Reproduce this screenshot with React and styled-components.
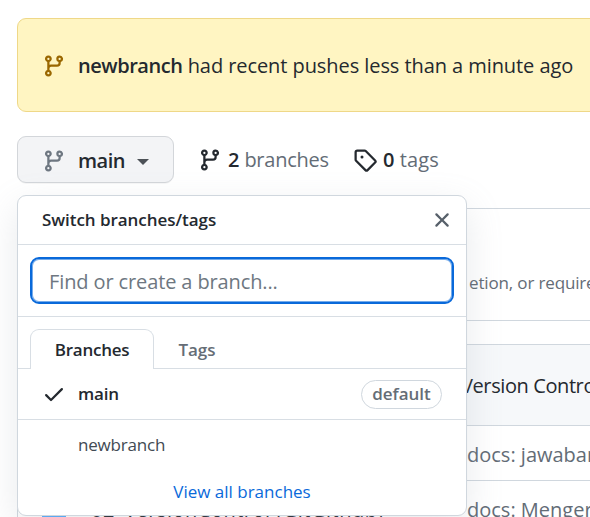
import React from "react";
import styled, { createGlobalStyle } from "styled-components";

const Global = createGlobalStyle`
  * { box-sizing: border-box; }
  html, body { margin: 0; background: #fff; }
  body {
    width: 590px; height: 517px; overflow: hidden;
    font-family: "Open Sans", "Noto Sans", sans-serif;
    color: #24292f;
  }
  button { font-family: inherit; }
`;

const Page = styled.main`
  width: 590px; height: 517px; overflow: hidden;
  padding: 18px 0 0 17px;
`;

const Text = styled.span`
  font-size: ${(p) => p.$size || 20}px;
  font-weight: ${(p) => p.$weight || 400};
  letter-spacing: ${(p) => p.$track || 0}px;
  color: ${(p) => p.$color || "#24292f"};
  line-height: 28px;
  white-space: pre;
`;

const Svg = styled.svg`
  flex: none; display: block;
  width: 24px; height: 24px;
  fill: ${(p) => p.$color};
`;

const Banner = styled.section`
  display: flex; align-items: center; gap: 12px;
  width: 620px; height: 94px; padding: 1px 0 0 24px;
  background: #fff5c2; border: 1px solid #efd888; border-radius: 9px;
`;

const BannerText = styled.p`
  margin: 1px 0 0;
`;

const Toolbar = styled.div`
  display: flex; align-items: center;
  height: 47px; margin-top: 24px;
`;

const BranchButton = styled.button`
  display: flex; align-items: center;
  width: 157px; height: 47px; padding: 2px 0 0 24px; margin-right: 24px;
  background: #f3f4f6; border: 1px solid #d3d6da; border-radius: 9px;
  box-shadow: 0 1px 0 rgba(27, 31, 36, 0.04);
`;

const ButtonLabel = styled.div`
  width: 59px; padding: 0 0 0 12px; text-align: left;
`;

const Caret = styled.span`
  margin: 3px 0 0 12px;
  border: 6px solid transparent; border-bottom: 0; border-top-color: #4c5157;
`;

const Count = styled.a`
  display: flex; align-items: center; gap: 6px;
  width: ${(p) => p.$width}px; height: 28px;
`;

const Area = styled.div`
  position: relative; height: 334px; display: flow-root;
`;

const Notice = styled.section`
  display: flex; align-items: center;
  width: 620px; height: 113px; margin-top: 25px; padding: 36px 0 0 451px;
  border: 1px solid #d0d7de; border-radius: 9px;
`;

const Table = styled.section`
  width: 620px; margin-top: 23px;
  border: 1px solid #d0d7de; border-radius: 9px; overflow: hidden;
`;

const Row = styled.div`
  display: grid; align-items: center;
  grid-template-columns: 73px ${(p) => (p.$head ? 370 : 376)}px 1fr;
  height: ${(p) => p.$height}px; padding-top: ${(p) => (p.$head ? 2 : 3)}px;
  background: ${(p) => (p.$head ? "#f6f8fa" : "#fff")};
  border-bottom: 1px solid #d0d7de;
`;

const Folder = styled(Svg)`
  margin: 8px 0 0 24px;
`;

const Popover = styled.div`
  position: absolute; left: 0; top: 12px; z-index: 2;
  width: 450px; height: 321px;
  background: #fff; border: 1px solid #d0d7de; border-radius: 9px;
  box-shadow: 0 12px 36px rgba(140, 149, 159, 0.2);
`;

const Head = styled.header`
  display: flex; align-items: center; justify-content: space-between;
  height: 49px; padding: 0 12px 0 24px;
  border-bottom: 1px solid #d8dee4;
`;

const Search = styled.div`
  height: 72px; padding: 12px; border-bottom: 1px solid #d8dee4;
`;

const Field = styled.div`
  display: flex; align-items: center;
  height: 47px; padding: 2px 0 0 17px;
  border: 2px solid #0969da; border-radius: 9px;
  box-shadow: inset 0 0 0 1px #75abea;
`;

const Tabs = styled.nav`
  display: flex; height: 52px; padding: 12px 12px 0;
  box-shadow: inset 0 -1px #d8dee4;
`;

const Tab = styled.div`
  display: flex; align-items: center; justify-content: center;
  width: ${(p) => p.$width}px; height: 40px;
  border: 1px solid ${(p) => (p.$active ? "#d8dee4" : "transparent")};
  border-bottom: 0; border-radius: 9px 9px 0 0;
  background: ${(p) => (p.$active ? "#fff" : "transparent")};
`;

const Item = styled.div`
  display: grid; grid-template-columns: 36px 1fr auto; align-items: center;
  height: ${(p) => (p.$line ? 51 : 50)}px; padding: 0 24px;
  border-bottom: ${(p) => (p.$line ? "1px solid #d8dee4" : "0")};
`;

const Badge = styled.span`
  display: flex; align-items: center; justify-content: center;
  width: 81px; height: 29px;
  border: 1px solid #d0d7de; border-radius: 15px;
`;

const Footer = styled.footer`
  display: flex; justify-content: center; height: 44px; padding-top: 8px;
`;

const paths = {
  branch:
    "M11.75 2.5a.75.75 0 100 1.5.75.75 0 000-1.5zm-2.25.75a2.25 2.25 0 113 2.122V6A2.5 2.5 0 0110 8.5H6a1 1 0 00-1 1v1.128a2.251 2.251 0 11-1.5 0V5.372a2.25 2.25 0 111.5 0v1.836A2.492 2.492 0 016 7h4a1 1 0 001-1v-.628A2.25 2.25 0 019.5 3.25zM4.25 12a.75.75 0 100 1.5.75.75 0 000-1.5zM3.5 3.25a.75.75 0 111.5 0 .75.75 0 01-1.5 0z",
  tag: "M2.5 7.775V2.75a.25.25 0 01.25-.25h5.025a.25.25 0 01.177.073l6.25 6.25a.25.25 0 010 .354l-5.025 5.025a.25.25 0 01-.354 0l-6.25-6.25a.25.25 0 01-.073-.177zm-1.5 0V2.75C1 1.784 1.784 1 2.75 1h5.025c.464 0 .91.184 1.238.513l6.25 6.25a1.75 1.75 0 010 2.474l-5.026 5.026a1.75 1.75 0 01-2.474 0l-6.25-6.25A1.75 1.75 0 011 7.775zM6 5a1 1 0 100 2 1 1 0 000-2z",
  check:
    "M13.78 4.22a.75.75 0 010 1.06l-7.25 7.25a.75.75 0 01-1.06 0L2.22 9.28a.75.75 0 011.06-1.06L6 10.94l6.72-6.72a.75.75 0 011.06 0z",
  close:
    "M3.72 3.72a.75.75 0 011.06 0L8 6.94l3.22-3.22a.75.75 0 111.06 1.06L9.06 8l3.22 3.22a.75.75 0 11-1.06 1.06L8 9.06l-3.22 3.22a.75.75 0 01-1.06-1.06L6.94 8 3.72 4.78a.75.75 0 010-1.06z",
  folder:
    "M1.75 1A1.75 1.75 0 000 2.75v10.5C0 14.216.784 15 1.75 15h12.5A1.75 1.75 0 0016 13.25v-8.5A1.75 1.75 0 0014.25 3h-6.5a.25.25 0 01-.2-.1l-.9-1.2c-.33-.44-.85-.7-1.4-.7h-3.5z",
};

const Icon = ({ name, color, as: Base = Svg }) => (
  <Base viewBox="0 0 16 16" $color={color} aria-hidden="true">
    <path fillRule="evenodd" d={paths[name]} />
  </Base>
);

export default function App() {
  return (
    <Page>
      <Global />
      <Banner>
        <Icon name="branch" color="#9a6700" />
        <BannerText>
          <Text $weight={600} $track={-0.45}>newbranch</Text>
          <Text $track={-0.07}> had recent pushes less than a minute ago</Text>
        </BannerText>
      </Banner>
      <Toolbar>
        <BranchButton>
          <Icon name="branch" color="#6e7781" />
          <ButtonLabel><Text $weight={600} $track={-0.5}>main</Text></ButtonLabel>
          <Caret />
        </BranchButton>
        <Count $width={155}>
          <Icon name="branch" color="#24292f" />
          <div><Text $weight={600}>2</Text><Text $color="#636c76" $track={-0.25}> branches</Text></div>
        </Count>
        <Count $width={100}>
          <Icon name="tag" color="#24292f" />
          <div><Text $weight={600}>0</Text><Text $color="#636c76" $track={0.1}> tags</Text></div>
        </Count>
      </Toolbar>
      <Area>
        <Popover>
          <Head>
            <Text $size={17} $weight={600} $track={-0.05}>Switch branches/tags</Text>
            <Icon name="close" color="#57606a" />
          </Head>
          <Search>
            <Field><Text $color="#6e7781" $track={-0.12}>Find or create a branch...</Text></Field>
          </Search>
          <Tabs>
            <Tab $active $width={124}><Text $size={17} $weight={600} $track={-0.25}>Branches</Text></Tab>
            <Tab $width={86}><Text $size={17} $weight={600} $color="#656d76" $track={-0.1}>Tags</Text></Tab>
          </Tabs>
          <Item $line>
            <Icon name="check" color="#24292f" />
            <Text $size={17} $weight={600} $track={-0.2}>main</Text>
            <Badge><Text $size={17} $weight={600} $color="#656d76">default</Text></Badge>
          </Item>
          <Item>
            <span />
            <Text $size={17} $color="#424a53" $track={-0.2}>newbranch</Text>
          </Item>
          <Footer><Text $size={17} $color="#0969da">View all branches</Text></Footer>
        </Popover>
        <Notice><Text $size={17} $color="#636c76" $track={-0.15}>etion, or require status</Text></Notice>
        <Table>
          <Row $head $height={81}><i /><i /><Text $track={-0.4}>Version Control</Text></Row>
          <Row $height={55}><i /><i /><Text $color="#636c76">docs: jawaban</Text></Row>
          <Row $height={55}>
            <Icon name="folder" color="#54aeff" as={Folder} />
            <Text $track={0.5}>02_VersionControl (GitGithub)</Text>
            <Text $color="#636c76">docs: Mengerjakan</Text>
          </Row>
        </Table>
      </Area>
    </Page>
  );
}
